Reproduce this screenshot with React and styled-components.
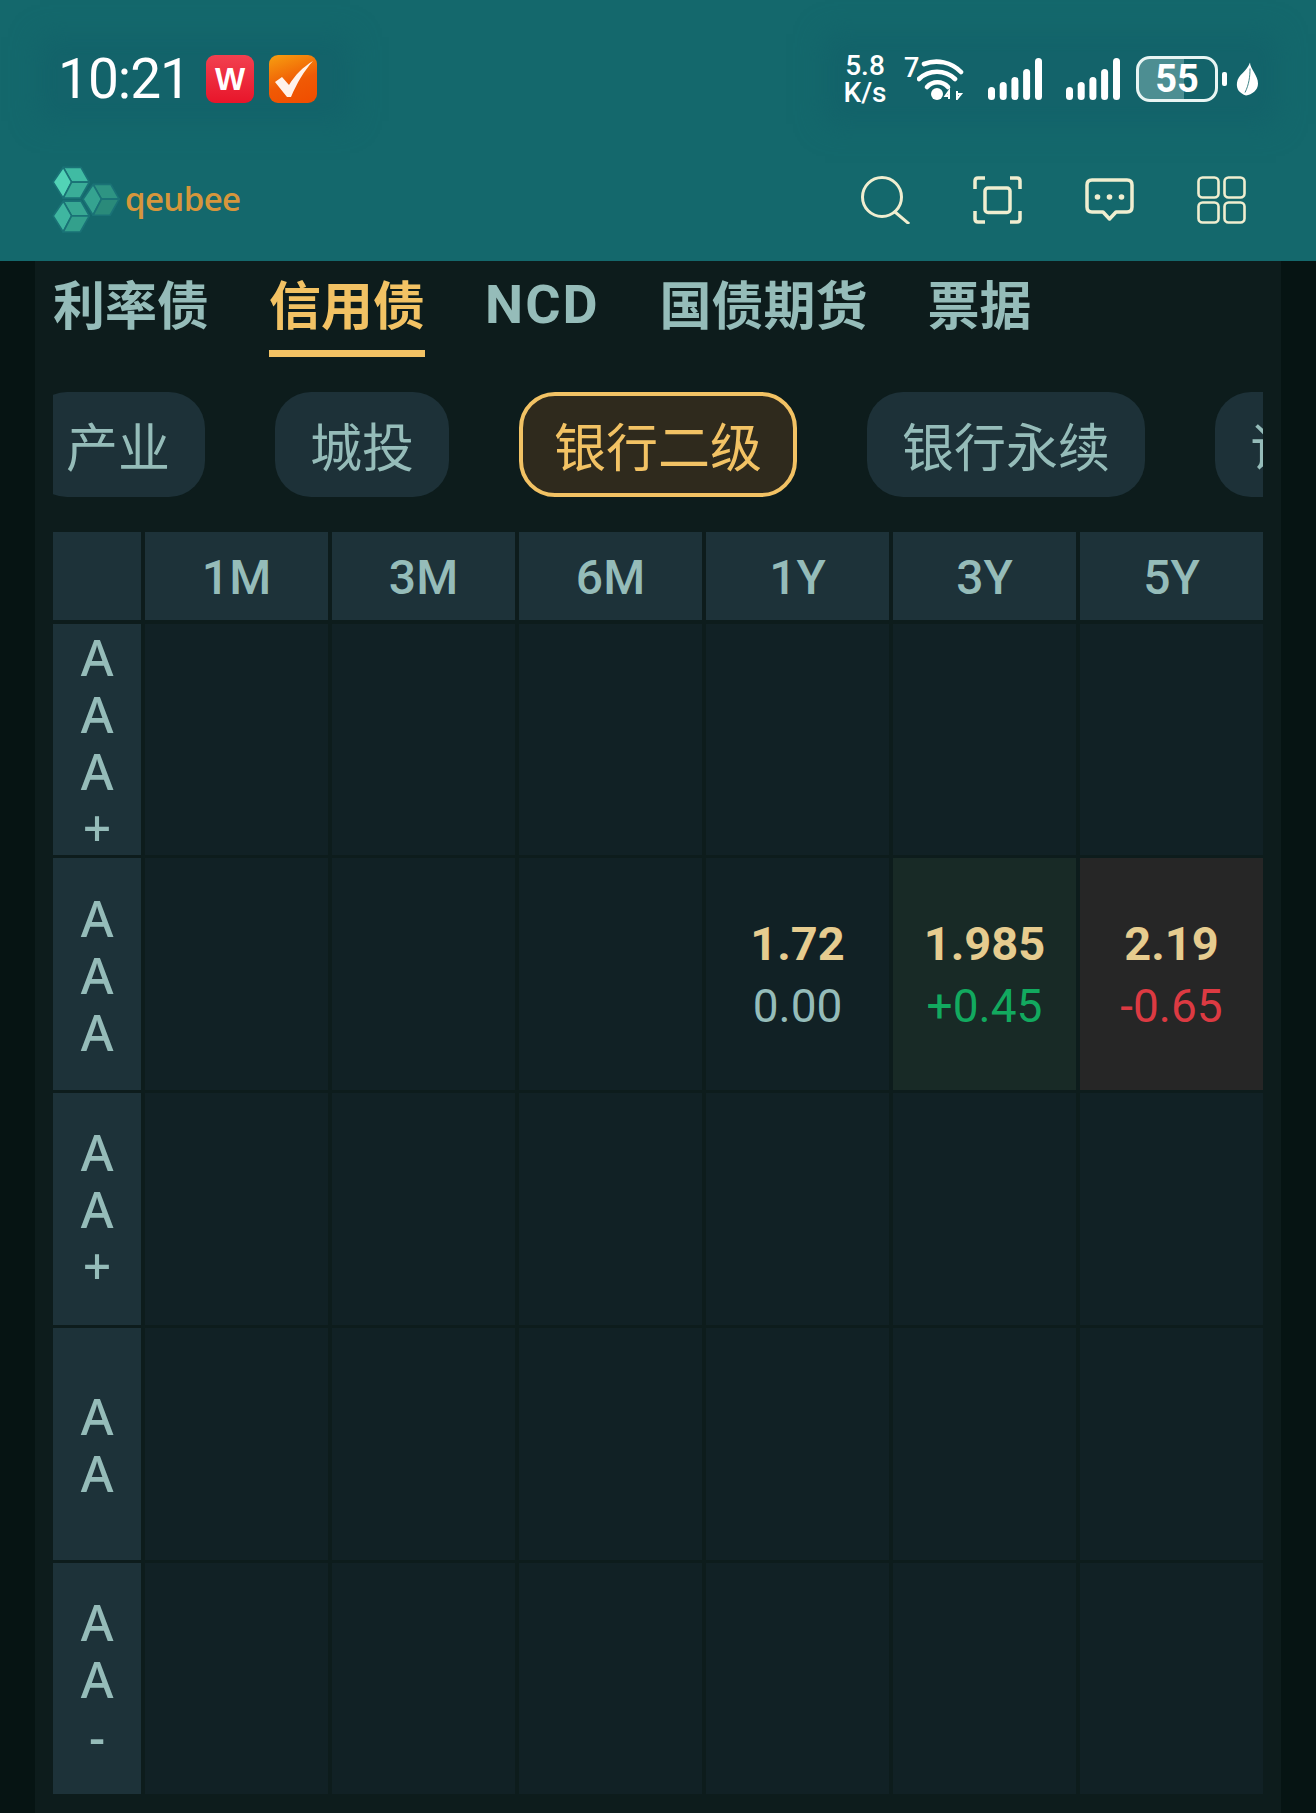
import React from "react";
import styled, { createGlobalStyle } from "styled-components";

const Global = createGlobalStyle`
  html, body { margin: 0; padding: 0; background: #061413; }
  #root { width: 1316px; height: 1813px; overflow: hidden; }
  * { box-sizing: border-box; }
`;

const CJK = `"Noto Sans CJK SC", "Noto Sans", sans-serif`;
const NUM = `Roboto, "Liberation Sans", sans-serif`;
const MUTED = "#95bcb9";
const GOLD = "#f2c264";

const Page = styled.div`
  width: 1316px;
  height: 1813px;
  display: flex;
  flex-direction: column;
  background: #061413;
`;

const Header = styled.header`
  height: 261px;
  flex: none;
  background: #14686c;
  display: flex;
  flex-direction: column;
`;

const StatusBar = styled.div`
  display: flex;
  align-items: center;
  justify-content: space-between;
  height: 48px;
  margin-top: 55px;
  padding: 0 58px 0 58px;
  color: #fff;
`;

const StatusGroup = styled.div`
  display: flex;
  align-items: center;
  background: #13636a;
  box-shadow: 0 0 26px 18px #13636a;
`;

const Time = styled.span`
  font: 400 55px/48px ${NUM};
  letter-spacing: -1px;
  width: 148px;
  color: #fff;
`;

const AppBadge = styled.div`
  width: 48px;
  height: 48px;
  border-radius: 9px;
  display: flex;
  align-items: center;
  justify-content: center;
  margin-right: 15px;
  background: ${(p) => p.$bg};
  color: #fff;
  font: 700 32px/1 "Liberation Sans", sans-serif;
`;

const Speed = styled.div`
  width: 44px;
  margin-right: 17px;
  font: 500 28px/27px ${NUM};
  text-align: center;
`;

const WifiWrap = styled.div`
  display: flex;
  align-items: flex-start;
  margin-right: 24px;
`;

const WifiSeven = styled.span`
  font: 500 27px/20px ${NUM};
  width: 13px;
  height: 42px;
`;

const SignalIcon = styled.svg`
  display: block;
  margin-right: ${(p) => p.$gap}px;
`;

const Battery = styled.div`
  width: 82px;
  height: 46px;
  border: 3px solid #e8f5f3;
  border-radius: 14px;
  background: linear-gradient(90deg, #4d8e92 0 59%, transparent 59%);
  font: 700 38px/40px ${NUM};
  text-align: center;
`;

const BatteryNub = styled.div`
  width: 5px;
  height: 14px;
  border-radius: 2px;
  background: #fff;
  margin: 0 9px 0 4px;
`;

const Toolbar = styled.div`
  display: flex;
  align-items: center;
  justify-content: space-between;
  height: 65px;
  margin-top: 64px;
  padding: 0 70px 0 51px;
`;

const Logo = styled.div`
  display: flex;
  align-items: center;
  gap: 4px;
`;

const LogoText = styled.span`
  font: 600 33px/1 "Open Sans", sans-serif;
  letter-spacing: -0.6px;
  color: #d6963c;
  margin-top: -3px;
`;

const ToolIcons = styled.div`
  display: flex;
  align-items: center;
  gap: 63px;
`;

const ToolIcon = styled.svg`
  display: block;
  width: 49px;
  height: 48px;
  fill: none;
  stroke: #f0eed0;
`;

const Body = styled.main`
  flex: 1;
  margin: 0 35px;
  padding: 7px 18px 0;
  background: #0d1c1c;
  min-height: 0;
`;

const Tabs = styled.nav`
  display: flex;
  gap: 60px;
`;

const Tab = styled.div`
  font: 700 ${(p) => (p.$latin ? "54px/74px " + NUM : "52px/70px " + CJK)};
  letter-spacing: ${(p) => (p.$latin ? 2 : 0)}px;
  color: ${(p) => (p.$active ? GOLD : MUTED)};
  padding-bottom: ${(p) => (p.$latin ? 8 : 12)}px;
  border-bottom: 7px solid ${(p) => (p.$active ? GOLD : "transparent")};
`;

const PillClip = styled.div`
  margin-top: 35px;
  width: 1210px;
  overflow: hidden;
`;

const PillTrack = styled.div`
  display: flex;
  gap: 70px;
  margin-left: -22px;
  width: max-content;
`;

const Pill = styled.div`
  height: 105px;
  border-radius: 36px;
  font: 400 52px/${(p) => (p.$active ? 97 : 105)}px ${CJK};
  white-space: nowrap;
  color: ${(p) => (p.$active ? GOLD : MUTED)};
  background: ${(p) => (p.$active ? "#2f2a1d" : "#1d3138")};
  border: ${(p) => (p.$active ? `4px solid ${GOLD}` : "none")};
  padding: 0 ${(p) => (p.$active ? 31 : 35)}px;
`;

const Table = styled.div`
  margin-top: 35px;
  display: grid;
  grid-template-columns: 88px repeat(6, 183px);
  grid-template-rows: 88px repeat(5, 231.4px);
  column-gap: 4px;
  row-gap: 3.5px;
`;

const HeadCell = styled.div`
  background: #1d3239;
  color: ${MUTED};
  font: 500 48px/92px ${NUM};
  text-align: center;
`;

const RowLabel = styled.div`
  background: #1d3239;
  color: ${MUTED};
  font: 500 50px/57px "Noto Sans", sans-serif;
  padding: ${(p) => (p.$long ? 8 : 2)}px 20px 0;
  word-break: break-all;
  text-align: center;
  display: flex;
  align-items: center;
  justify-content: center;
`;

const Cell = styled.div`
  background: ${(p) => p.$bg || "#112125"};
  display: flex;
  flex-direction: column;
  align-items: center;
  justify-content: center;
  padding-top: 2px;
`;

const Rate = styled.span`
  font: 700 47px/63px ${NUM};
  color: #e6cc8f;
`;

const Change = styled.span`
  font: 400 46px/63px ${NUM};
  color: ${(p) => p.$color};
`;

const WpsIcon = () => <AppBadge $bg="linear-gradient(180deg,#f2404f,#e8152a)">W</AppBadge>;

const TodoIcon = () => (
  <AppBadge $bg="linear-gradient(160deg,#f7a010,#f05a05 55%,#f04c00)">
    <svg width="44" height="44" viewBox="0 0 44 44">
      <path d="M4 25 L11 20 L18 28 C24 18 32 10 42 4 C33 14 26 26 20 40 L16 40 Z" fill="#fff2ea" />
    </svg>
  </AppBadge>
);

const Wifi = () => (
  <svg width="47" height="42" viewBox="0 0 47 42" fill="none" stroke="#fff" strokeWidth="4.6" strokeLinecap="round">
    <path d="M7 6 A34 34 0 0 1 44 14" />
    <path d="M2 21 A26 26 0 0 1 38 21" />
    <path d="M10 29 A14 14 0 0 1 31 29" />
    <circle cx="20" cy="36" r="6" fill="#fff" stroke="none" />
    <path d="M32 41 V33 L28.5 38 H32" strokeWidth="2" strokeLinecap="butt" />
    <path d="M40 33 V41 L44 36 H40" strokeWidth="2" strokeLinecap="butt" />
  </svg>
);

const Signal = ({ gap }) => (
  <SignalIcon $gap={gap} width="54" height="42" viewBox="0 0 54 42" fill="#fff">
    <rect x="0" y="29" width="7" height="13" rx="3.5" />
    <rect x="11.7" y="24" width="7" height="18" rx="3.5" />
    <rect x="23.4" y="19" width="7" height="23" rx="3.5" />
    <rect x="35.1" y="11" width="7" height="31" rx="3.5" />
    <rect x="47" y="0" width="7" height="42" rx="3.5" />
  </SignalIcon>
);

const Leaf = () => (
  <svg width="22" height="36" viewBox="0 0 22 33">
    <path d="M14 0 C14 6 22 13 22 21 C22 28 16 32 10 33 C4 31 0 27 1 20 C2 12 11 9 14 0Z" fill="#fff" />
    <path d="M14 6 C14 14 13 22 9 30" stroke="#14686c" strokeWidth="0.8" fill="none" />
  </svg>
);

const Cube = ({ cx, cy, tone }) => (
  <g transform={`translate(${cx} ${cy})`} stroke="#1a7276" strokeWidth="5" strokeLinejoin="round">
    <path d="M-25 -44 L28 -44 L53 0 L0 0 Z" fill={tone[1]} />
    <path d="M-25 -44 L0 0 L-25 48 L-55 0 Z" fill={tone[0]} />
    <path d="M0 0 L53 0 L26 48 L-25 48 Z" fill={tone[2]} />
  </g>
);

const LogoMark = () => (
  <svg width="70" height="67" viewBox="65 48 206 200">
    <Cube cx={125} cy={96} tone={["#52d3b6", "#40bba3", "#3aad98"]} />
    <Cube cx={125} cy={197} tone={["#3fb6a0", "#38a893", "#33a08c"]} />
    <Cube cx={214} cy={147} tone={["#35a390", "#2e9483", "#2a8a7a"]} />
  </svg>
);

const SearchIcon = () => (
  <ToolIcon viewBox="0 0 49 48" strokeWidth="3">
    <circle cx="21" cy="21" r="19.500" />
    <path d="M34 36 L47 47" strokeLinecap="square" />
  </ToolIcon>
);

const ScanIcon = () => (
  <ToolIcon viewBox="0 0 49 48" strokeWidth="3.5">
    <path d="M12 2 H5 Q2 2 2 5 V13" />
    <path d="M37 2 H44 Q47 2 47 5 V13" />
    <path d="M12 46 H5 Q2 46 2 43 V35" />
    <path d="M37 46 H44 Q47 46 47 43 V35" />
    <rect x="12" y="12" width="25" height="24.500" rx="3" />
  </ToolIcon>
);

const MessageIcon = () => (
  <ToolIcon viewBox="0 0 49 48" strokeWidth="3.5">
    <path d="M7 4 H42 Q47 4 47 9 V31 Q47 36 42 36 H31 L24.500 43 L18 36 H7 Q2 36 2 31 V9 Q2 4 7 4 Z" strokeLinejoin="round" />
    <g fill="#f0eed0" stroke="none">
      <circle cx="12.500" cy="21" r="2.800" />
      <circle cx="24.500" cy="21" r="2.800" />
      <circle cx="36.500" cy="21" r="2.800" />
    </g>
  </ToolIcon>
);

const GridIcon = () => (
  <ToolIcon viewBox="0 0 49 48" strokeWidth="2.600">
    <rect x="1.500" y="1.500" width="20" height="20" rx="4" />
    <rect x="27.500" y="1.500" width="20" height="20" rx="4" />
    <rect x="1.500" y="26.500" width="20" height="20" rx="4" />
    <rect x="27.500" y="26.500" width="20" height="20" rx="4" />
  </ToolIcon>
);

const tabs = ["利率债", "信用债", "NCD", "国债期货", "票据"];
const pills = ["产业", "城投", "银行二级", "银行永续", "证券"];
const tenors = ["1M", "3M", "6M", "1Y", "3Y", "5Y"];
const ratings = ["AAA+", "AAA", "AA+", "AA", "AA-"];
const quotes = {
  "AAA-3": { rate: "1.72", change: "0.00", color: MUTED },
  "AAA-4": { rate: "1.985", change: "+0.45", color: "#12a95f", bg: "#182a26" },
  "AAA-5": { rate: "2.19", change: "-0.65", color: "#dc3a42", bg: "#262626" },
};

export default function App() {
  return (
    <Page>
      <Global />
      <Header>
        <StatusBar>
          <StatusGroup>
            <Time>10:21</Time>
            <WpsIcon />
            <TodoIcon />
          </StatusGroup>
          <StatusGroup>
            <Speed>5.8<br />K/s</Speed>
            <WifiWrap>
              <WifiSeven>7</WifiSeven>
              <Wifi />
            </WifiWrap>
            <Signal gap={24} />
            <Signal gap={16} />
            <Battery>55</Battery>
            <BatteryNub />
            <Leaf />
          </StatusGroup>
        </StatusBar>
        <Toolbar>
          <Logo>
            <LogoMark />
            <LogoText>qeubee</LogoText>
          </Logo>
          <ToolIcons>
            <SearchIcon />
            <ScanIcon />
            <MessageIcon />
            <GridIcon />
          </ToolIcons>
        </Toolbar>
      </Header>
      <Body>
        <Tabs>
          {tabs.map((t) => (
            <Tab key={t} $active={t === "信用债"} $latin={t === "NCD"}>{t}</Tab>
          ))}
        </Tabs>
        <PillClip>
          <PillTrack>
            {pills.map((p) => (
              <Pill key={p} $active={p === "银行二级"}>{p}</Pill>
            ))}
          </PillTrack>
        </PillClip>
        <Table>
          <HeadCell />
          {tenors.map((t) => (
            <HeadCell key={t}>{t}</HeadCell>
          ))}
          {ratings.map((r) => (
            <React.Fragment key={r}>
              <RowLabel $long={r.length > 3}><span>{r}</span></RowLabel>
              {tenors.map((t, i) => {
                const q = quotes[`${r}-${i}`];
                return (
                  <Cell key={t} $bg={q && q.bg}>
                    {q && <Rate>{q.rate}</Rate>}
                    {q && <Change $color={q.color}>{q.change}</Change>}
                  </Cell>
                );
              })}
            </React.Fragment>
          ))}
        </Table>
      </Body>
    </Page>
  );
}
